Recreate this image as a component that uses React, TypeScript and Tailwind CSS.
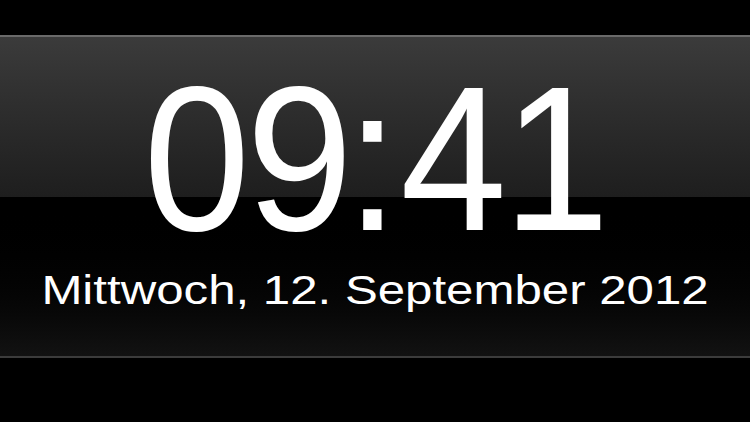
export default function App() {
  return (
    <div className="flex h-[422px] w-[750px] flex-col bg-black" style={{ fontFamily: '"Liberation Sans", Arial, sans-serif' }}>
      <div className="h-[35px] shrink-0" />
      <div className="relative flex h-[323px] shrink-0 flex-col border-t-2 border-b-2 border-t-[#6a6a6a] border-b-[#3c3c3c]">
        <div className="h-[160px] bg-gradient-to-b from-[#3b3b3b] to-[#1e1e1e]" />
        <div className="flex-1 bg-gradient-to-b from-[#000000] to-[#121212]" />
        <div className="absolute inset-0 flex flex-col items-center">
          <div className="mt-[42px] flex scale-x-[0.93] text-[206px] leading-[160px] font-normal text-white">
            <span className="tracking-[-4px]">09</span>
            <span className="mr-[5px] flex w-[50px] justify-center">:</span>
            <span className="tracking-[-4px]">41</span>
          </div>
          <div className="mt-[28px] scale-x-[1.2] text-[41px] leading-[46px] text-white">Mittwoch, 12. September 2012</div>
        </div>
      </div>
      <div className="flex-1" />
    </div>
  )
}
